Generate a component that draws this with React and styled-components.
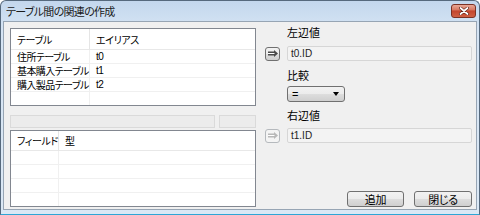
import React from 'react';
import styled, { createGlobalStyle } from 'styled-components';

const GlobalStyle = createGlobalStyle`
  html, body {
    margin: 0;
    padding: 0;
    background: #ffffff;
  }
  body {
    font-family: "Liberation Sans", "Noto Sans CJK JP", sans-serif;
    font-size: 11px;
    color: #000;
    font-feature-settings: "palt";
  }
  * {
    box-sizing: border-box;
  }
`;

const Window = styled.div`
  width: 480px;
  height: 215px;
  display: flex;
  flex-direction: column;
  background: linear-gradient(#c3d7ed, #d5e4f4 28px, #dbe8f5);
  border: 1px solid #56697d;
  border-bottom-color: #2ea6d6;
  border-radius: 6px 6px 0 0;
  padding: 0 2px 4px;
`;

const TitleBar = styled.div`
  height: 20px;
  display: flex;
  justify-content: space-between;
  align-items: center;
  padding: 0 1px 0 3px;
`;

const Title = styled.div`
  font-size: 11px;
  color: #1b1b1b;
  letter-spacing: -0.7px;
  margin-top: -1px;
  white-space: nowrap;
`;

const CloseButton = styled.div`
  align-self: flex-start;
  margin-top: 3px;
  width: 25px;
  height: 14px;
  border: 1px solid #7b3124;
  border-radius: 3px;
  background: linear-gradient(#e9a897, #d87962 40%, #c4452d 50%, #cf5f43);
  display: flex;
  align-items: center;
  justify-content: center;
`;

const Client = styled.div`
  flex: 1;
  background: #f0f0f0;
  border: 1px solid #97a5b4;
  padding: 6px 4px 2px 6px;
  display: grid;
  grid-template-columns: 246px 1fr;
  column-gap: 9px;
`;

const LeftColumn = styled.div`
  display: flex;
  flex-direction: column;
`;

const ListView = styled.div`
  height: ${p => p.$height}px;
  border: 1px solid #828790;
  background: #fff;
  display: grid;
  grid-template-columns: ${p => p.$split}px 1fr;
  grid-template-rows: ${p => p.$head}px repeat(3, 14px) 1fr;
  font-size: 10px;
`;

const HeadCell = styled.div`
  display: flex;
  align-items: center;
  padding-left: 6px;
  border-bottom: 1px solid #e8e8e8;
  border-right: ${p => (p.$first ? '1px solid #e5e5e5' : 'none')};
  letter-spacing: -0.4px;
  white-space: nowrap;
`;

const Cell = styled.div`
  display: flex;
  align-items: center;
  padding-left: 6px;
  border-bottom: ${p => (p.$last ? 'none' : '1px solid #f0f0f0')};
  border-right: ${p => (p.$first ? '1px solid #f0f0f0' : 'none')};
  letter-spacing: -0.6px;
  white-space: nowrap;
  min-width: 0;
`;

const DisabledRow = styled.div`
  display: flex;
  gap: 4px;
  height: 13px;
  margin: 9px 0 2px;
`;

const DisabledBox = styled.div`
  width: ${p => (p.$width ? `${p.$width}px` : 'auto')};
  flex: ${p => (p.$width ? 'none' : '1')};
  background: #ececec;
  border: 1px solid #dadada;
`;

const RightColumn = styled.div`
  display: flex;
  flex-direction: column;
`;

const Label = styled.div`
  height: 12px;
  line-height: 12px;
  margin-left: 22px;
  margin-top: ${p => p.$top}px;
  font-size: 11px;
`;

const ValueRow = styled.div`
  display: flex;
  align-items: center;
  gap: 7px;
  height: 15px;
  margin-top: ${p => p.$top}px;
`;

const ArrowButton = styled.div`
  width: 15px;
  height: 14px;
  border: 1px solid ${p => (p.$disabled ? '#b5b9bd' : '#707070')};
  border-radius: 3px;
  background: ${p =>
    p.$disabled
      ? '#f4f4f4'
      : 'linear-gradient(#f2f2f2, #ebebeb 50%, #dddddd 51%, #cfcfcf)'};
  display: flex;
  align-items: center;
  justify-content: center;
`;

const ValueField = styled.div`
  flex: 1;
  height: 15px;
  border: 1px solid #d6d6d6;
  border-radius: 2px;
  background: #f3f3f3;
  padding-left: 3px;
  display: flex;
  align-items: center;
  font-size: 10px;
  color: #222;
`;

const Select = styled.div`
  width: 58px;
  height: 16px;
  margin: 4px 0 0 22px;
  border: 1px solid #707070;
  border-radius: 3px;
  background: linear-gradient(#f2f2f2, #ebebeb 50%, #dddddd 51%, #cfcfcf);
  display: flex;
  align-items: center;
  justify-content: space-between;
  padding: 0 5px 0 4px;
  font-size: 11px;
`;

const Caret = styled.span`
  width: 0;
  height: 0;
  border-left: 3.5px solid transparent;
  border-right: 3.5px solid transparent;
  border-top: 4px solid #000;
`;

const Footer = styled.div`
  margin-top: auto;
  display: flex;
  justify-content: flex-end;
  gap: 10px;
`;

const PushButton = styled.div`
  width: ${p => p.$width}px;
  height: 16px;
  border: 1px solid #707070;
  border-radius: 3px;
  background: linear-gradient(#f2f2f2, #ebebeb 50%, #dddddd 51%, #cfcfcf);
  display: flex;
  align-items: center;
  justify-content: center;
  font-size: 11px;
  letter-spacing: -0.3px;
`;

const ArrowIcon = ({ color }) => (
  <svg width="10" height="7" viewBox="0 0 10 7">
    <path d="M0 1.5h6V0l4 3.5-4 3.5V5.5H0z" fill={color} />
    <path d="M0 3.5h6.5" stroke="#fff" strokeWidth="1" />
  </svg>
);

const CloseIcon = () => (
  <svg width="10" height="8" viewBox="0 0 10 8">
    <path d="M1.5 1l7 6M8.5 1l-7 6" stroke="#5a1a10" strokeWidth="3" strokeLinecap="round" />
    <path d="M1.5 1l7 6M8.5 1l-7 6" stroke="#fff" strokeWidth="1.8" strokeLinecap="round" />
  </svg>
);

const tables = [
  ['住所テーブル', 't0'],
  ['基本購入テーブル', 't1'],
  ['購入製品テーブル', 't2'],
  ['', ''],
];

const App = () => {
  return (
    <>
      <GlobalStyle />
      <Window>
        <TitleBar>
          <Title>テーブル間の関連の作成</Title>
          <CloseButton>
            <CloseIcon />
          </CloseButton>
        </TitleBar>
        <Client>
          <LeftColumn>
            <ListView $height={78} $split={79} $head={21}>
              <HeadCell $first>テーブル</HeadCell>
              <HeadCell>エイリアス</HeadCell>
              {tables.map(([name, alias], i) => (
                <React.Fragment key={i}>
                  <Cell $first $last={i === 3}>{name}</Cell>
                  <Cell $last={i === 3}>{alias}</Cell>
                </React.Fragment>
              ))}
            </ListView>
            <DisabledRow>
              <DisabledBox $width={205} />
              <DisabledBox />
            </DisabledRow>
            <ListView $height={77} $split={48} $head={20}>
              <HeadCell $first>フィールド</HeadCell>
              <HeadCell>型</HeadCell>
              {[0, 1, 2, 3].map(i => (
                <React.Fragment key={i}>
                  <Cell $first $last={i === 3} />
                  <Cell $last={i === 3} />
                </React.Fragment>
              ))}
            </ListView>
          </LeftColumn>
          <RightColumn>
            <Label $top={-1}>左辺値</Label>
            <ValueRow $top={7}>
              <ArrowButton>
                <ArrowIcon color="#4a4a4a" />
              </ArrowButton>
              <ValueField>t0.ID</ValueField>
            </ValueRow>
            <Label $top={9}>比較</Label>
            <Select>
              <span>=</span>
              <Caret />
            </Select>
            <Label $top={8}>右辺値</Label>
            <ValueRow $top={6}>
              <ArrowButton $disabled>
                <ArrowIcon color="#b8b8b8" />
              </ArrowButton>
              <ValueField>t1.ID</ValueField>
            </ValueRow>
            <Footer>
              <PushButton $width={57}>追加</PushButton>
              <PushButton $width={58}>閉じる</PushButton>
            </Footer>
          </RightColumn>
        </Client>
      </Window>
    </>
  );
};

export default App;
